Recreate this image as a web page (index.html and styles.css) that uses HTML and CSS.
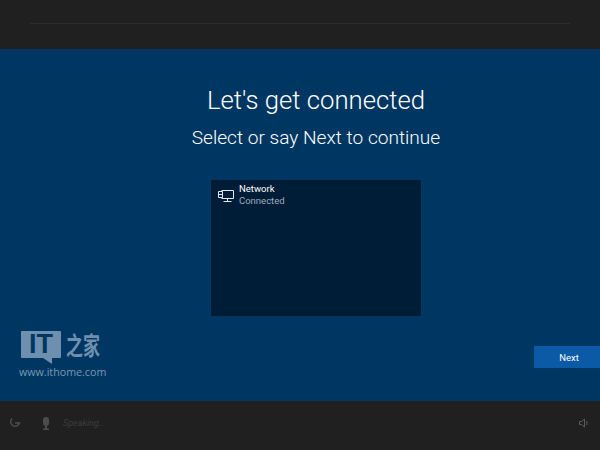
FILE: index.html
```html
<!DOCTYPE html>
<html lang="en">
<head>
    <meta charset="UTF-8">
    <meta name="viewport" content="width=device-width, initial-scale=1.0">
    <title>Let's get connected</title>
    <link rel="stylesheet" href="styles.css">
</head>
<body>

    <!-- Progress bar -->
    <div class="top-bar">
        <div class="progress"></div>
    </div>

    <div class="main">
        <div class="content">
            <h1>Let's get connected</h1>
            <h2>Select or say Next to continue</h2>

            <div class="network-list">
                <div class="network-item">
                    <svg class="network-icon" width="16" height="15" viewBox="0 0 16 15" fill="none" stroke="#e4e8ec" stroke-width="1">
                        <path d="M3.5 1.5H15.5V9.5H3.5"/>
                        <path d="M9.5 9.5V12.5M5.5 12.5H13.5"/>
                        <path d="M0.5 2.5H4.5V8.5H0.5Z" fill="#001d38"/>
                        <path d="M0.5 5.5H4.5"/>
                    </svg>
                    <div class="network-text">
                        <div class="network-name">Network</div>
                        <div class="network-status">Connected</div>
                    </div>
                </div>
            </div>
        </div>

        <div class="actions">
            <button class="next-btn">Next</button>
        </div>

        <!-- Watermark -->
        <div class="watermark">
            <div class="logo">
                <div class="logo-it">IT<span class="logo-tail"></span></div>
                <div class="logo-cn">之家</div>
            </div>
            <div class="logo-url">www.ithome.com</div>
        </div>
    </div>

    <div class="bottom-bar">
        <svg class="bar-icon" width="12" height="12" viewBox="0 0 12 12" fill="none" stroke="#4c4c4c" stroke-width="1.5">
            <path d="M3 1.5A4.5 4.5 0 1 0 10.5 6H6"/>
        </svg>
        <svg class="bar-icon mic" width="8" height="13" viewBox="0 0 8 13" fill="#4c4c4c">
            <rect x="1" y="0" width="6" height="9" rx="3"/>
            <path d="M3 9H5V11.5H7V13H1V11.5H3Z"/>
        </svg>
        <span class="speaking">Speaking...</span>
        <svg class="bar-icon volume" width="10" height="10" viewBox="0 0 10 10" fill="none" stroke="#5c5c5c" stroke-width="1">
            <path d="M0.5 3.5H2.5L5.5 1V9L2.5 6.5H0.5Z"/>
            <path d="M7.5 3C8.2 4.2 8.2 5.8 7.5 7"/>
        </svg>
    </div>

</body>
</html>
```

FILE: styles.css
```css
body {
    margin: 0;
    width: 600px;
    height: 450px;
    overflow: hidden;
    display: flex;
    flex-direction: column;
    background-color: #202020;
    color: white;
    font-family: Roboto, Arial, sans-serif;
}

.top-bar {
    height: 49px;
    padding: 23px 30px 0;
    box-sizing: border-box;
    background-color: #202020;
}

.progress {
    height: 1px;
    background-color: #2c2c2c;
}

.main {
    position: relative;
    height: 352px;
    display: flex;
    flex-direction: column;
    background-color: #003762;
}

.content {
    display: flex;
    flex-direction: column;
    align-items: center;
    padding: 33px 0 0 32px;
}

h1 {
    margin: 0;
    font-size: 25.7px;
    line-height: 36px;
    font-weight: 300;
}

h2 {
    margin: 7px 0 0;
    font-size: 19.1px;
    line-height: 26px;
    font-weight: 300;
}

.network-list {
    width: 210px;
    height: 136px;
    margin-top: 29px;
    background-color: #001d38;
}

.network-item {
    display: flex;
    gap: 5px;
    padding: 3px 7px;
}

.network-icon {
    margin-top: 6px;
}

.network-name {
    font-size: 9.5px;
    line-height: 12px;
    font-weight: 400;
}

.network-status {
    font-size: 9.5px;
    line-height: 12px;
    color: #9fabb8;
}

.actions {
    display: flex;
    justify-content: flex-end;
    margin-top: 30px;
}

.next-btn {
    width: 66px;
    height: 22px;
    padding: 0 0 0 4px;
    border: none;
    background-color: #0a5aa5;
    color: white;
    font-family: inherit;
    font-size: 9.5px;
    font-weight: 400;
}

.watermark {
    position: absolute;
    left: 19px;
    top: 282px;
    color: #7a97b3;
}

.logo {
    display: flex;
    align-items: flex-start;
    gap: 5px;
    margin-left: 2px;
}

.logo-it {
    position: relative;
    width: 40px;
    height: 27px;
    background-color: #6f8fae;
    border-radius: 1px;
    color: #003762;
    font-family: "Liberation Sans", Arial, sans-serif;
    font-size: 27px;
    font-weight: 700;
    line-height: 27px;
    text-align: center;
}

.logo-tail {
    position: absolute;
    left: 22px;
    top: 27px;
    border-top: 6px solid #6f8fae;
    border-left: 9px solid transparent;
}

.logo-cn {
    font-family: "Noto Sans CJK SC", sans-serif;
    font-size: 17px;
    font-weight: 700;
    line-height: 27px;
    color: #6f8fae;
    transform: scaleY(1.45);
}

.logo-url {
    margin-top: 7px;
    font-family: "Open Sans", Arial, sans-serif;
    font-size: 10.7px;
    line-height: 14px;
    white-space: nowrap;
}

.bottom-bar {
    flex: 1;
    display: flex;
    align-items: center;
    padding: 0 11px 5px 9px;
    background-color: #202020;
}

.mic {
    margin-left: 21px;
}

.speaking {
    margin-left: 13px;
    font-size: 9px;
    font-style: italic;
    color: #3d3d3d;
}

.volume {
    margin-left: auto;
}
```
